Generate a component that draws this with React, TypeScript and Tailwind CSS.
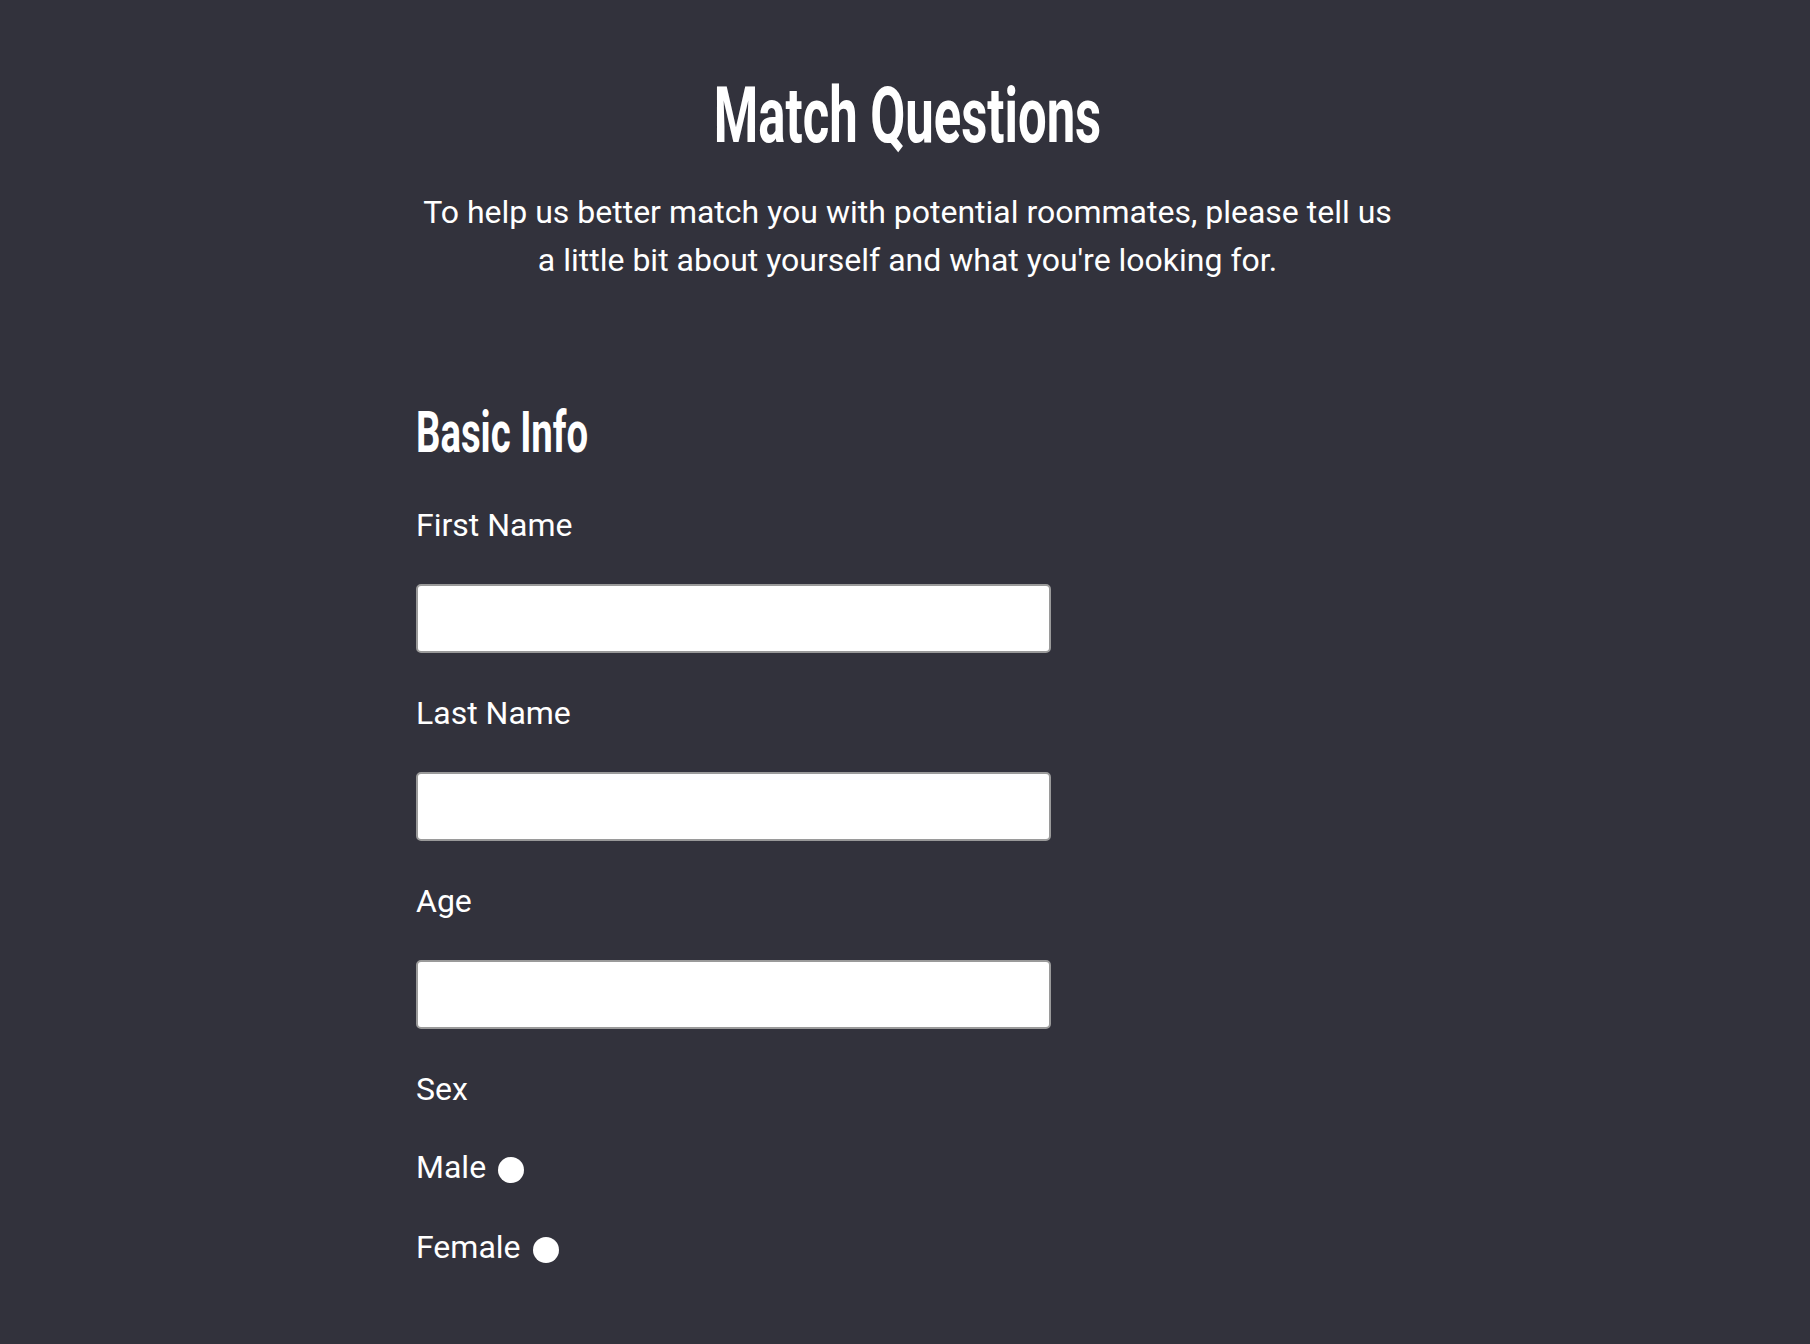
import React from "react";

const fields = ["First Name", "Last Name", "Age"];

export default function App() {
  return (
    <div className="min-h-[1344px] w-full bg-[#32323c] text-white font-['Roboto',sans-serif]">
      <div className="mx-auto w-[988px] pl-[5px] pt-[78px] pb-16">
        {/* Heading */}
        <div className="text-center">
          <h1 className="inline-block scale-x-[0.66] text-[77px] font-bold leading-none">
            Match Questions
          </h1>
        </div>
        <p className="mt-[33px] text-center text-[32px] leading-[48px]">
          To help us better match you with potential roommates, please tell us
          <br />a little bit about yourself and what you're looking for.
        </p>

        {/* Form */}
        <form className="mt-[119px] flex flex-col">
          <h2 className="origin-left scale-x-[0.66] text-[58px] font-bold leading-none">
            Basic Info
          </h2>
          <div className="h-[4px]" />
          {fields.map((f) => (
            <div key={f} className="flex flex-col">
              <label className="mt-[42px] text-[32px] leading-[36px]">{f}</label>
              <input
                type="text"
                className="mt-[41px] h-[69px] w-[635px] rounded-[5px] border-2 border-[#9a9a9a] bg-white"
              />
            </div>
          ))}
          <label className="mt-[42px] text-[32px] leading-[36px]">Sex</label>
          <label className="mt-[42px] flex items-center gap-3 text-[32px] leading-[36px]">
            Male
            <input
              type="radio"
              name="sex"
              className="mt-[5px] h-[26px] w-[26px] appearance-none rounded-full bg-white"
            />
          </label>
          <label className="mt-[44px] flex items-center gap-3 text-[32px] leading-[36px]">
            Female
            <input
              type="radio"
              name="sex"
              className="mt-[5px] h-[26px] w-[26px] appearance-none rounded-full bg-white"
            />
          </label>
        </form>
      </div>
    </div>
  );
}
